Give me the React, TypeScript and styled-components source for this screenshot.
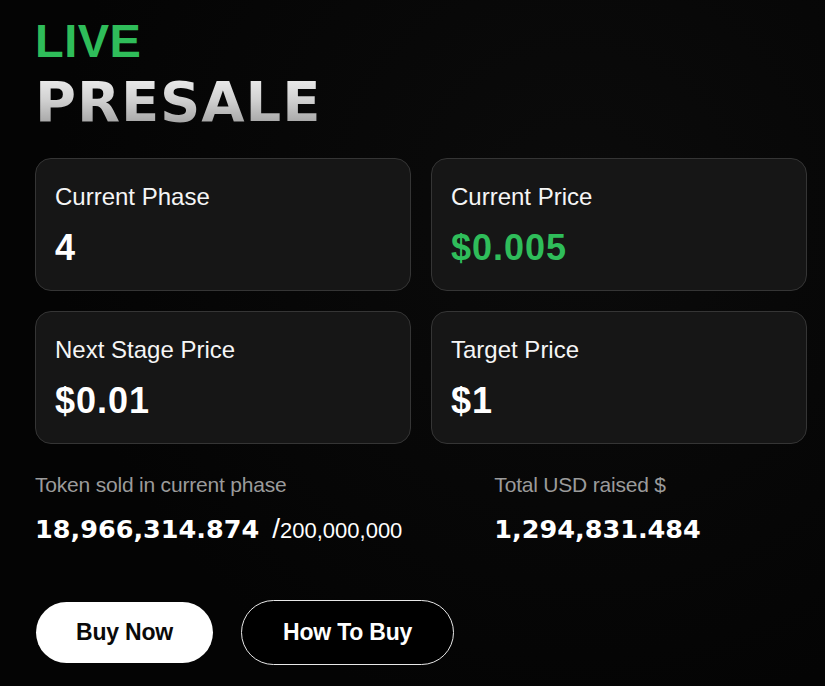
import React from "react";
import styled, { createGlobalStyle } from "styled-components";

// --- Data ---
interface StatCard {
  label: string;
  value: string;
  accent?: boolean;
}

const cards: StatCard[] = [
  { label: "Current Phase", value: "4" },
  { label: "Current Price", value: "$0.005", accent: true },
  { label: "Next Stage Price", value: "$0.01" },
  { label: "Target Price", value: "$1" },
];

// --- Global ---
const GlobalStyle = createGlobalStyle`
  html, body {
    margin: 0;
    padding: 0;
    background: #050505;
  }
  body {
    font-family: "Liberation Sans", Arial, sans-serif;
    color: #ffffff;
  }
`;

// --- Styled Components ---
const Page = styled.div`
  width: 825px;
  height: 686px;
  box-sizing: border-box;
  padding: 17px 18px 0 35px;
  background: radial-gradient(circle at 70% 30%, #0b0b0b 0%, #040404 70%);
  overflow: hidden;
`;

const Live = styled.div`
  font-size: 47px;
  line-height: 1;
  font-weight: 700;
  color: #2fbd5a;
  letter-spacing: 0.5px;
`;

const Presale = styled.div`
  margin-top: 10px;
  font-family: "DejaVu Sans", sans-serif;
  font-size: 56px;
  line-height: 1;
  font-weight: 700;
  letter-spacing: 0.9px;
  background: linear-gradient(180deg, #f0f0f0 0%, #d2d2d2 45%, #9a9a9a 100%);
  -webkit-background-clip: text;
  background-clip: text;
  color: transparent;
`;

const CardGrid = styled.div`
  margin-top: 28px;
  display: grid;
  grid-template-columns: 376px 376px;
  column-gap: 20px;
  row-gap: 20px;
`;

const Card = styled.div`
  height: 133px;
  box-sizing: border-box;
  padding: 24px 19px 0;
  border: 1px solid #353535;
  border-radius: 16px;
  background: #161616;
`;

const CardLabel = styled.div`
  font-size: 24px;
  line-height: 1.2;
  color: #f5f5f5;
`;

const CardValue = styled.div<{ $accent?: boolean }>`
  margin-top: 14px;
  font-size: 36px;
  line-height: 1.2;
  font-weight: 700;
  letter-spacing: 1px;
  color: ${(p) => (p.$accent ? "#2fbd5a" : "#ffffff")};
`;

const Stats = styled.div`
  margin-top: 28px;
  display: flex;
  gap: 92px;
`;

const Stat = styled.div`
  display: flex;
  flex-direction: column;
`;

const StatLabel = styled.div`
  font-size: 21px;
  line-height: 1.2;
  color: #9b9b9b;
  letter-spacing: -0.2px;
`;

const StatValue = styled.div`
  margin-top: 15px;
  font-family: "DejaVu Sans", sans-serif;
  font-size: 25.5px;
  line-height: 34px;
  font-weight: 700;
  white-space: nowrap;
`;

const StatTotal = styled.span`
  margin-left: 13px;
  font-family: "Liberation Sans", Arial, sans-serif;
  font-size: 22px;
  font-weight: 400;
`;

const Slash = styled.span`
  font-size: 28px;
`;

const Buttons = styled.div`
  margin-top: 52px;
  display: flex;
  align-items: center;
  gap: 28px;
`;

const PillButton = styled.button<{ $filled?: boolean }>`
  height: ${(p) => (p.$filled ? "61px" : "65px")};
  padding: 0 ${(p) => (p.$filled ? "40px" : "41px")};
  margin-left: ${(p) => (p.$filled ? "1px" : "0")};
  border-radius: 999px;
  border: ${(p) => (p.$filled ? "none" : "1.5px solid #e8e8e8")};
  background: ${(p) => (p.$filled ? "#ffffff" : "#000000")};
  color: ${(p) => (p.$filled ? "#0a0a0a" : "#ffffff")};
  font-family: "Liberation Sans", Arial, sans-serif;
  font-size: 23px;
  font-weight: 700;
  letter-spacing: -0.2px;
  cursor: pointer;
`;

// --- Main Component ---
const App: React.FC = () => {
  return (
    <Page>
      <GlobalStyle />
      <Live>LIVE</Live>
      <Presale>PRESALE</Presale>

      <CardGrid>
        {cards.map((card) => (
          <Card key={card.label}>
            <CardLabel>{card.label}</CardLabel>
            <CardValue $accent={card.accent}>{card.value}</CardValue>
          </Card>
        ))}
      </CardGrid>

      <Stats>
        <Stat>
          <StatLabel>Token sold in current phase</StatLabel>
          <StatValue>
            18,966,314.874
            <StatTotal>
              <Slash>/</Slash>200,000,000
            </StatTotal>
          </StatValue>
        </Stat>
        <Stat>
          <StatLabel>Total USD raised $</StatLabel>
          <StatValue>1,294,831.484</StatValue>
        </Stat>
      </Stats>

      <Buttons>
        <PillButton $filled>Buy Now</PillButton>
        <PillButton>How To Buy</PillButton>
      </Buttons>
    </Page>
  );
};

export default App;
